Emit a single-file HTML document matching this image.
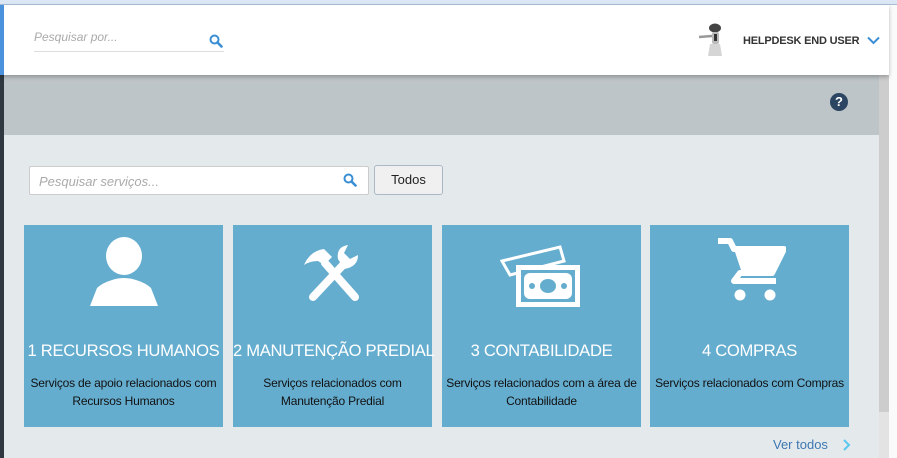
<!DOCTYPE html><html><head><meta charset="utf-8"><style>
*{margin:0;padding:0;box-sizing:border-box}
body{width:897px;height:458px;overflow:hidden;background:#fafafa;font-family:"Liberation Sans",Arial,sans-serif;position:relative}
.a{position:absolute}
.card{position:absolute;top:225px;width:199px;height:202px;background:#65adcf;text-align:center}
.card h3{position:absolute;top:116px;left:0;right:0;font-weight:normal;color:#fff;font-size:16.6px;letter-spacing:-0.3px;white-space:nowrap}
.card p{position:absolute;top:149px;left:0;right:0;color:#111;font-size:12px;line-height:18px;letter-spacing:-0.2px}
.card svg{position:absolute;left:50%;top:10px;transform:translateX(-50%)}
</style></head><body>
<div class="a" style="left:0;top:0;width:897px;height:5px;background:#dbe7f5;border-bottom:1px solid #a9bed6"></div>
<div class="a" style="left:0;top:5px;width:889px;height:70px;background:#fff;box-shadow:0 2px 4px rgba(0,0,0,.25);z-index:2"></div>
<div class="a" style="left:0;top:5px;width:4px;height:70px;background:#4a93dc;z-index:3"></div>
<div class="a" style="left:0;top:75px;width:4px;height:383px;background:#2f3841"></div>
<div class="a" style="left:4px;top:75px;width:875px;height:60px;background:#bec5c8"></div>
<div class="a" style="left:4px;top:135px;width:875px;height:323px;background:#e4e9ec"></div>
<div class="a" style="left:879px;top:75px;width:10px;height:337px;background:#cdcdcd"></div>
<div class="a" style="left:879px;top:412px;width:10px;height:46px;background:#e3e3e3"></div>
<div class="a" style="z-index:4;left:34px;top:30px;width:190px;height:22px;border-bottom:1px solid #ddd;font-style:italic;color:#aaa;font-size:12px">Pesquisar por...</div>
<svg class="a" style="z-index:4;left:209px;top:34px" width="14" height="14" viewBox="0 0 14 14"><circle cx="5.5" cy="5.5" r="4" stroke="#3a8fd4" stroke-width="2" fill="none"/><path d="M8.5 8.5L12.5 12.5" stroke="#3a8fd4" stroke-width="2.6" stroke-linecap="round"/></svg>
<svg class="a" style="z-index:4;left:696px;top:22px" width="34" height="36" viewBox="0 0 34 36"><ellipse cx="19" cy="6" rx="6" ry="4.5" fill="#444"/><rect x="16" y="10" width="7" height="12" rx="2" fill="#bbb"/><path d="M3 15 L16 14" stroke="#999" stroke-width="2.5"/><rect x="18" y="12" width="3" height="7" fill="#333"/><path d="M14 22 L24 22 L26 34 L12 34Z" fill="#d5d5d5"/></svg>
<div class="a" style="z-index:4;left:743px;top:35px;font-size:11px;font-weight:bold;color:#333;letter-spacing:-0.2px">HELPDESK END USER</div>
<svg class="a" style="z-index:4;left:867px;top:36px" width="13" height="9" viewBox="0 0 13 9"><path d="M1 1.5L6.5 7L12 1.5" stroke="#3a8fd4" stroke-width="2" fill="none"/></svg>
<div class="a" style="left:830px;top:93px;width:18px;height:18px;border-radius:50%;background:#2b4562;color:#fff;font-size:13px;font-weight:bold;text-align:center;line-height:18px">?</div>
<div class="a" style="left:29px;top:166px;width:340px;height:29px;background:#fff;border:1px solid #ccc;border-radius:2px;font-style:italic;color:#aaa;font-size:13px;padding:7px 0 0 9px">Pesquisar serviços...</div>
<svg class="a" style="left:343px;top:173px" width="14" height="14" viewBox="0 0 14 14"><circle cx="5.5" cy="5.5" r="4" stroke="#3a8fd4" stroke-width="2" fill="none"/><path d="M8.5 8.5L12.5 12.5" stroke="#3a8fd4" stroke-width="2.6" stroke-linecap="round"/></svg>
<div class="a" style="left:374px;top:165px;width:69px;height:30px;background:#f0f0f0;border:1px solid #a9b8c4;border-radius:3px;font-size:13px;color:#222;text-align:center;line-height:28px">Todos</div>

<div class="card" style="left:24px"><svg width="72" height="70" viewBox="0 0 72 70" style="top:12px"><ellipse cx="36" cy="19" rx="18" ry="19" fill="#fff"/><path d="M2 69 L9 51 Q14 46 24 43 Q36 39 48 43 Q58 46 63 51 L70 69Z" fill="#fff"/></svg><h3>1 RECURSOS HUMANOS</h3><p>Serviços de apoio relacionados com<br>Recursos Humanos</p></div>
<div class="card" style="left:233px"><svg width="70" height="72" viewBox="0 0 70 72"><path d="M15 62 L45 30" stroke="#fff" stroke-width="8" stroke-linecap="round"/><path d="M6 30 Q12 16 26 14 L34 22 L26 30 L20 26 Q12 26 6 30Z" fill="#fff"/><path d="M27 28 L57 62" stroke="#fff" stroke-width="8" stroke-linecap="round"/><path d="M40 24 Q38 12 50 10 L46 18 L52 24 L60 20 Q60 32 46 34Z" fill="#fff"/></svg><h3>2 MANUTENÇÃO PREDIAL</h3><p>Serviços relacionados com<br>Manutenção Predial</p></div>
<div class="card" style="left:442px"><svg width="84" height="72" viewBox="0 0 84 72"><path d="M2 26 L60 12 L64 26 L10 40Z" fill="none" stroke="#fff" stroke-width="3"/><rect x="16" y="30" width="64" height="42" fill="#fff"/><rect x="21" y="35" width="54" height="32" fill="#65adcf"/><rect x="24" y="38" width="48" height="26" rx="6" fill="#fff"/><ellipse cx="48" cy="51" rx="8" ry="7" fill="#65adcf"/><circle cx="32" cy="51" r="3" fill="#65adcf"/><circle cx="64" cy="51" r="3" fill="#65adcf"/></svg><h3>3 CONTABILIDADE</h3><p>Serviços relacionados com a área de<br>Contabilidade</p></div>
<div class="card" style="left:650px"><svg width="72" height="72" viewBox="0 0 72 72"><path d="M4 6 L16 6 L20 14 L70 14 L58 38 L26 38 L20 46 L62 46" stroke="#fff" stroke-width="6" fill="none" stroke-linejoin="round"/><path d="M20 14 L70 14 L58 38 L28 38Z" fill="#fff"/><circle cx="26" cy="60" r="5.5" fill="#fff"/><circle cx="56" cy="60" r="5.5" fill="#fff"/></svg><h3>4 COMPRAS</h3><p>Serviços relacionados com Compras</p></div>

<div class="a" style="left:773px;top:437px;font-size:13px;color:#3d78b3">Ver todos</div>
<svg class="a" style="left:842px;top:439px" width="9" height="12" viewBox="0 0 9 12"><path d="M2 1L7 6L2 11" stroke="#5ac8ef" stroke-width="2" fill="none"/></svg>
</body></html>
